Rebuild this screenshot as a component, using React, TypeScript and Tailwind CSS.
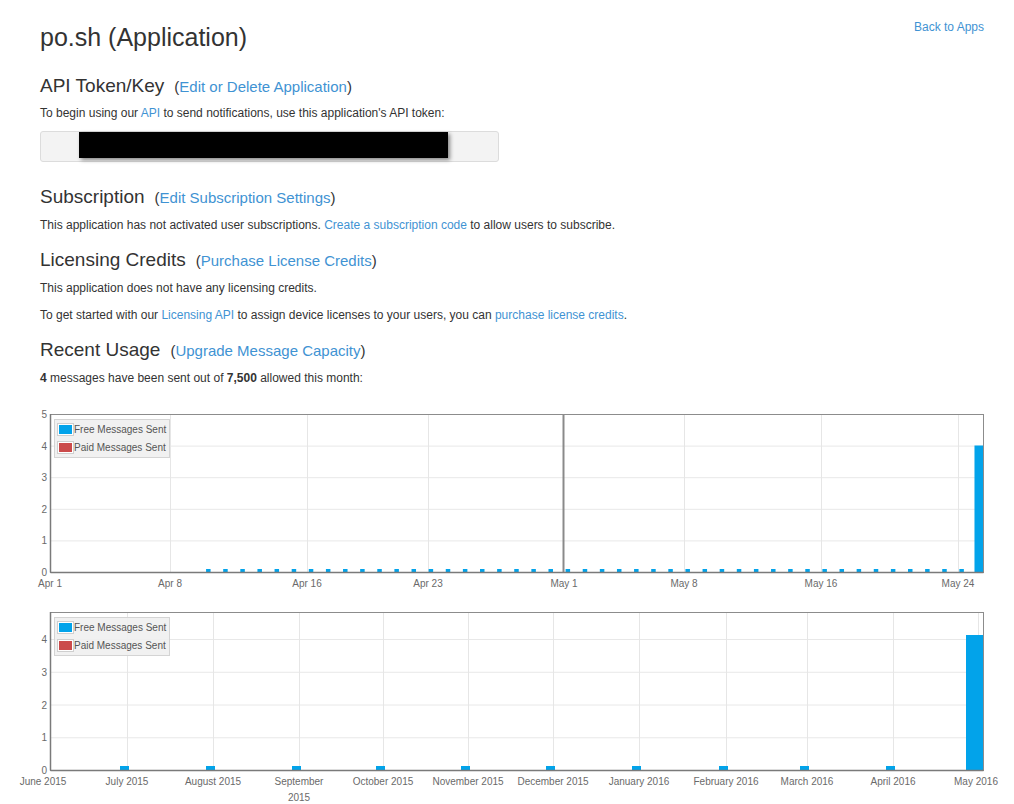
import React from 'react';

// Application detail page: token, subscription, licensing and usage charts.

const LINK = 'text-[#3f93d3]';

type Tick = { label: string; x: number; lines?: string[] };

type Bar = { x: number; w: number; top: number };

type ChartProps = {
  height: number;
  plotTop: number;
  plotBottom: number;
  yTicks: { v: number; y: number }[];
  xTicks: Tick[];
  xGrid: number[];
  labelY: number;
  bars: Bar[];
  marker?: number;
};

const PLOT_L = 50.5;
const PLOT_R = 983.5;

function UsageChart({ height, plotTop, plotBottom, yTicks, xTicks, xGrid, labelY, bars, marker }: ChartProps) {
  return (
    <svg width={1014} height={height} className="block" style={{ fontFamily: '"Liberation Sans", Arial, sans-serif' }}>
      {/* grid */}
      {yTicks.map((t) => (
        <line key={`h${t.v}`} x1={PLOT_L} x2={PLOT_R} y1={t.y + 0.5} y2={t.y + 0.5} stroke="#e8e8e8" />
      ))}
      {xGrid.map((x) => (
        <line key={`v${x}`} x1={x + 0.5} x2={x + 0.5} y1={plotTop} y2={plotBottom} stroke="#e6e6e6" />
      ))}
      {marker !== undefined && (
        <line x1={marker} x2={marker} y1={plotTop} y2={plotBottom} stroke="#8a8a8a" strokeWidth={2} />
      )}

      {/* bars */}
      {bars.map((b, i) => (
        <rect key={i} x={b.x} y={b.top} width={b.w} height={plotBottom - b.top} fill="#02a3ea" />
      ))}

      {/* frame */}
      <rect x={PLOT_L} y={plotTop + 0.5} width={PLOT_R - PLOT_L} height={plotBottom - plotTop} fill="none" stroke="#8c8c8c" />
      <line x1={PLOT_L} x2={PLOT_L} y1={plotTop} y2={plotBottom + 0.5} stroke="#7a7a7a" strokeWidth={1.5} />
      <line x1={PLOT_L} x2={PLOT_R} y1={plotBottom + 0.5} y2={plotBottom + 0.5} stroke="#7a7a7a" strokeWidth={1.5} />

      {/* axis labels */}
      {yTicks.map((t) => (
        <text key={`yl${t.v}`} x={47} y={t.y + 4} textAnchor="end" fontSize={10} fill="#6a6a6a">
          {t.v}
        </text>
      ))}
      {xTicks.map((t) =>
        (t.lines ?? [t.label]).map((line, i) => (
          <text key={`${t.label}${i}`} x={t.x} y={labelY + 4 + i * 16} textAnchor="middle" fontSize={10} fill="#6a6a6a">
            {line}
          </text>
        )),
      )}

      {/* legend */}
      <g transform={`translate(54 ${plotTop + 5})`}>
        <rect x={0.5} y={0.5} width={115} height={38} fill="#f0f0f0" fillOpacity={0.9} stroke="#d4d4d4" />
        <rect x={3.5} y={4.5} width={16} height={12} fill="#fff" stroke="#cfcfcf" />
        <rect x={5} y={6} width={13} height={9} fill="#02a3ea" />
        <text x={20} y={13.5} fontSize={10} fill="#555">Free Messages Sent</text>
        <rect x={3.5} y={22.5} width={16} height={12} fill="#fff" stroke="#cfcfcf" />
        <rect x={5} y={24} width={13} height={9} fill="#cb4b4b" />
        <text x={20} y={31.5} fontSize={10} fill="#555">Paid Messages Sent</text>
      </g>
    </svg>
  );
}

function Heading({ title, link }: { title: string; link: string }) {
  return (
    <h3 className="text-[19px] leading-[24px] text-[#333]">
      {title}
      <span className="ml-[10px] text-[15px]">
        (<a className={LINK}>{link}</a>)
      </span>
    </h3>
  );
}

// Daily chart: Apr 1 .. May 25, 17.12px per day.
const DAY = 17.12;
const day = (d: number) => 50 + d * DAY;

const dailyBars: Bar[] = [
  ...Array.from({ length: 45 }, (_, i) => ({ x: day(i + 9) + 2, w: 4.5, top: 168 })),
  { x: day(54), w: 983.5 - day(54), top: 44.5 },
];

const monthLines = [127, 213, 299, 383, 468, 553, 639, 726, 807, 893];

const monthlyBars: Bar[] = [
  ...monthLines.map((x) => ({ x: x - 7, w: 9, top: 165 })),
  { x: 966, w: 17.5, top: 34 },
];

export default function App() {
  return (
    <div
      className="h-[804px] overflow-hidden bg-white text-[#333]"
      style={{ fontFamily: '"Liberation Sans", Arial, sans-serif' }}
    >
      <div className="pl-[40px] pr-[30px] pt-[19px]">
        <div className="flex items-start justify-between">
          <h1 className="mt-[3px] text-[25px] leading-[30px] text-[#333]">po.sh (Application)</h1>
          <a className={`text-[12px] leading-[16px] ${LINK}`}>Back to Apps</a>
        </div>

        <div className="mt-[22px]">
          <Heading title="API Token/Key" link="Edit or Delete Application" />
        </div>
        <p className="mt-[5px] text-[12px] leading-[18px]">
          To begin using our <a className={LINK}>API</a> to send notifications, use this application's API token:
        </p>
        <div className="mt-[9px] flex h-[31px] w-[459px] items-start rounded-[3px] border border-[#dcdcdc] bg-[#f3f3f3] pl-[38px]">
          <div className="h-[26px] w-[369px] bg-black shadow-[2px_2px_4px_rgba(0,0,0,0.45)]" />
        </div>

        <div className="mt-[23px]">
          <Heading title="Subscription" link="Edit Subscription Settings" />
        </div>
        <p className="mt-[6px] text-[12px] leading-[18px]">
          This application has not activated user subscriptions.{' '}
          <a className={LINK}>Create a subscription code</a> to allow users to subscribe.
        </p>

        <div className="mt-[14px]">
          <Heading title="Licensing Credits" link="Purchase License Credits" />
        </div>
        <p className="mt-[6px] text-[12px] leading-[18px]">This application does not have any licensing credits.</p>
        <p className="mt-[9px] text-[12px] leading-[18px]">
          To get started with our <a className={LINK}>Licensing API</a> to assign device licenses to your users, you can{' '}
          <a className={LINK}>purchase license credits</a>.
        </p>

        <div className="mt-[14px]">
          <Heading title="Recent Usage" link="Upgrade Message Capacity" />
        </div>
        <p className="mt-[6px] text-[12px] leading-[18px]">
          <b>4</b> messages have been sent out of <b>7,500</b> allowed this month:
        </p>
      </div>

      <div className="mt-[14px]">
        <UsageChart
          height={200}
          plotTop={13}
          plotBottom={171}
          yTicks={[0, 1, 2, 3, 4, 5].map((v) => ({ v, y: 171 - v * 31.6 }))}
          xTicks={[
            { label: 'Apr 1', x: 50 },
            { label: 'Apr 8', x: 170 },
            { label: 'Apr 16', x: 307 },
            { label: 'Apr 23', x: 428 },
            { label: 'May 1', x: 564 },
            { label: 'May 8', x: 684 },
            { label: 'May 16', x: 821 },
            { label: 'May 24', x: 958 },
          ]}
          xGrid={[170, 307, 428, 684, 821, 958]}
          labelY={182}
          bars={dailyBars}
          marker={563.5}
        />
        <UsageChart
          height={204}
          plotTop={11}
          plotBottom={169}
          yTicks={[0, 1, 2, 3, 4].map((v) => ({ v, y: 169 - v * 32.75 }))}
          xTicks={[
            { label: 'June 2015', x: 43 },
            { label: 'July 2015', x: 127 },
            { label: 'August 2015', x: 213 },
            { label: 'September 2015', x: 299, lines: ['September', '2015'] },
            { label: 'October 2015', x: 383 },
            { label: 'November 2015', x: 468 },
            { label: 'December 2015', x: 553 },
            { label: 'January 2016', x: 639 },
            { label: 'February 2016', x: 726 },
            { label: 'March 2016', x: 807 },
            { label: 'April 2016', x: 893 },
            { label: 'May 2016', x: 976 },
          ]}
          xGrid={[...monthLines, 978]}
          labelY={180}
          bars={monthlyBars}
        />
      </div>
    </div>
  );
}
